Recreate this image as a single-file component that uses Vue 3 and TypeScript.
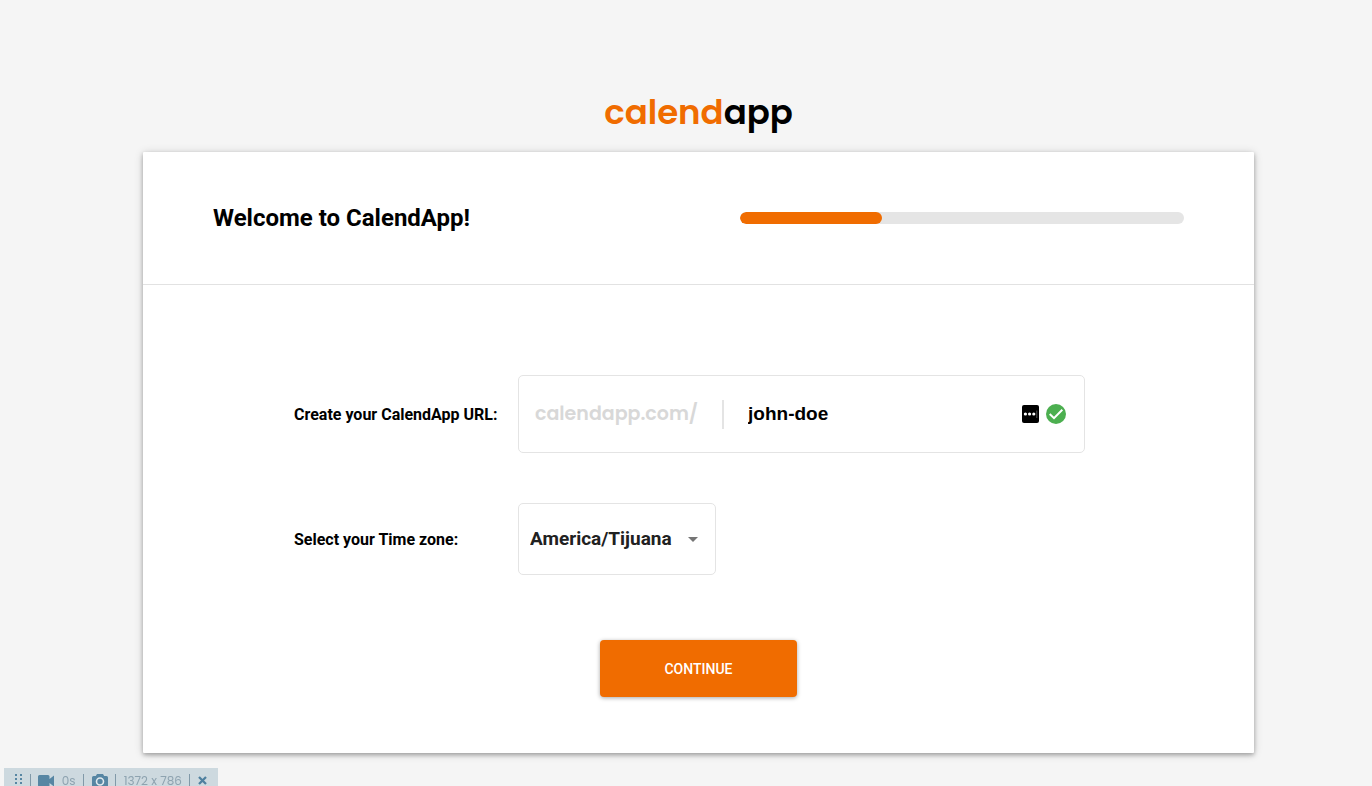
<script setup lang="ts">
import { computed, ref } from 'vue'

const slug = ref('john-doe')
const zone = ref('America/Tijuana')
const zones: string[] = ['America/Tijuana', 'America/Denver', 'America/Chicago']
const progress = ref(32)
const barStyle = computed(() => ({ width: `${progress.value}%` }))
</script>

<template>
  <div class="page">
    <header class="brand">
      <h1 class="logo"><span class="logo-accent">calend</span>app</h1>
    </header>

    <main class="card">
      <div class="card-head">
        <h2 class="title">Welcome to CalendApp!</h2>
        <div class="track" role="progressbar" aria-label="Setup progress" :aria-valuenow="progress" aria-valuemin="0" aria-valuemax="100">
          <div class="bar" :style="barStyle"></div>
        </div>
      </div>

      <form class="form" @submit.prevent>
        <div class="row">
          <label class="label" for="slug">Create your CalendApp URL:</label>
          <div class="url-field">
            <span class="prefix">calendapp.com/</span>
            <span class="divider"></span>
            <input id="slug" v-model="slug" class="slug" type="text" autocomplete="off" spellcheck="false" />
            <svg class="autofill" width="17" height="18" viewBox="0 0 17 18" aria-hidden="true">
              <rect width="17" height="18" rx="2" fill="#000" />
              <circle cx="3.4" cy="9" r="1.6" fill="#fff" />
              <circle cx="7.6" cy="9" r="1.6" fill="#fff" />
              <circle cx="11.8" cy="9" r="1.6" fill="#fff" />
              <path d="M14.8 5.500v7.500" stroke="#555" stroke-width="1" />
            </svg>
            <svg class="valid" width="20" height="20" viewBox="0 0 20 20" aria-hidden="true">
              <circle cx="10" cy="10" r="10" fill="#4caf50" />
              <path d="M3.700 10 8 14.200 16.300 5.800" fill="none" stroke="#fff" stroke-width="2" />
            </svg>
          </div>
        </div>

        <div class="row">
          <label class="label" for="zone">Select your Time zone:</label>
          <div class="zone-field">
            <select id="zone" v-model="zone" class="zone">
              <option v-for="z in zones" :key="z" :value="z">{{ z }}</option>
            </select>
            <svg class="caret" width="10" height="5" viewBox="0 0 10 5" aria-hidden="true">
              <path d="M0 0h10L5 5z" fill="#757575" />
            </svg>
          </div>
        </div>

        <button class="continue" type="submit">CONTINUE</button>
      </form>
    </main>

    <aside class="recorder" aria-label="Screen recorder">
      <svg class="grip" width="7" height="10" viewBox="0 0 7 10" aria-hidden="true">
        <path d="M0 0h2v2H0zM5 0h2v2H5zM0 4h2v2H0zM5 4h2v2H5zM0 8h2v2H0zM5 8h2v2H5z" fill="#5786a3" />
      </svg>
      <span class="tick"></span>
      <button class="tool" type="button" aria-label="Record">
        <svg width="16" height="12" viewBox="0 0 16 12">
          <path d="M1.500 0H10q1.500 0 1.500 1.500V4L16 0.500v11L11.500 8v2.500Q11.500 12 10 12H1.500Q0 12 0 10.500v-9Q0 0 1.500 0z" fill="#5786a3" />
        </svg>
      </button>
      <span class="time">0s</span>
      <span class="tick"></span>
      <button class="tool" type="button" aria-label="Capture">
        <svg width="16" height="14" viewBox="0 0 16 14">
          <path d="M5 0h6l1.200 2H14.500Q16 2 16 3.500v9Q16 14 14.500 14h-13Q0 14 0 12.500v-9Q0 2 1.500 2h2.300z" fill="#5786a3" />
          <circle cx="8" cy="7.500" r="3.500" fill="#5786a3" stroke="#e2eaee" stroke-width="1.600" />
        </svg>
      </button>
      <span class="tick"></span>
      <span class="size">1372 x 786</span>
      <span class="tick"></span>
      <button class="tool" type="button" aria-label="Close">
        <svg width="9" height="9" viewBox="0 0 9 9">
          <path d="M1 1l7 7M8 1 1 8" stroke="#4f809f" stroke-width="2.300" />
        </svg>
      </button>
    </aside>
  </div>
</template>

<style>
body {
  margin: 0;
  background: #f5f5f5;
}
</style>

<style scoped>
* {
  box-sizing: border-box;
}
.page {
  min-height: 100vh;
  padding: 0 118px 32px 143px;
  background: #f5f5f5;
  font-family: Roboto, "Liberation Sans", sans-serif;
  color: #000;
}
.brand {
  display: flex;
  justify-content: center;
  padding: 88px 0 16px;
}
.logo {
  margin: 0;
  font: 600 34px/48px Poppins, Inter, sans-serif;
}
.logo-accent {
  color: #f06c00;
}
.card {
  background: #fff;
  border-radius: 1px;
  box-shadow: 0 2px 4px rgba(0, 0, 0, 0.28), 0 1px 10px rgba(0, 0, 0, 0.16);
}
.card-head {
  display: flex;
  align-items: center;
  justify-content: space-between;
  padding: 50px 70px;
  border-bottom: 1px solid #e2e2e2;
}
.title {
  margin: 0;
  font-size: 24px;
  line-height: 32px;
  font-weight: 700;
}
.track {
  width: 444px;
  height: 12px;
  border-radius: 6px;
  background: #e5e5e5;
  overflow: hidden;
}
.bar {
  height: 12px;
  border-radius: 6px;
  background: #f06c00;
}
.form {
  display: flex;
  flex-direction: column;
  padding: 90px 151px 56px;
}
.row {
  display: grid;
  grid-template-columns: 204px minmax(0, 1fr);
  column-gap: 20px;
  align-items: center;
  margin-bottom: 50px;
  padding-right: 18px;
}
.label {
  padding-top: 2px;
  font-size: 16px;
  line-height: 20px;
  font-weight: 700;
  white-space: nowrap;
}
.url-field {
  display: flex;
  align-items: center;
  height: 78px;
  padding: 0 18px 0 16px;
  border: 1px solid #e4e4e4;
  border-radius: 5px;
}
.prefix {
  font: 600 19px/28px Poppins, Inter, sans-serif;
  color: #d8d8d8;
}
.divider {
  width: 2px;
  height: 29px;
  margin: 0 24px;
  background: #e4e4e4;
}
.slug {
  flex: 1;
  min-width: 0;
  padding: 0;
  border: 0;
  outline: 0;
  background: none;
  font: 700 19px/28px "Liberation Sans", Arial, sans-serif;
  color: #000;
}
.autofill {
  margin-right: 7px;
}
.zone-field {
  display: grid;
  grid-template-columns: 1fr;
  align-items: center;
  justify-self: start;
  width: 198px;
  height: 72px;
  border: 1px solid #e4e4e4;
  border-radius: 5px;
}
.zone,
.caret {
  grid-area: 1 / 1;
}
.zone {
  width: 100%;
  height: 100%;
  padding: 0 32px 0 11px;
  border: 0;
  outline: 0;
  appearance: none;
  background: none;
  font: 700 19px/28px Roboto, sans-serif;
  color: #212121;
}
.caret {
  justify-self: end;
  margin-right: 17px;
  pointer-events: none;
}
.continue {
  align-self: center;
  width: 197px;
  height: 57px;
  margin: 15px 0 0;
  padding: 0;
  border: 0;
  border-radius: 4px;
  background: #f06c00;
  box-shadow: 0 1px 4px rgba(0, 0, 0, 0.35);
  font: 500 14px/20px Roboto, sans-serif;
  color: #fff;
}
.recorder {
  position: fixed;
  left: 4px;
  bottom: 0;
  display: flex;
  align-items: center;
  width: 214px;
  height: 18px;
  padding: 7px 11px 0;
  justify-content: space-between;
  background: #cdd9df;
  font: 400 12px/18px Poppins, Inter, sans-serif;
  color: #8ea3b0;
}
.tick {
  width: 1px;
  height: 14px;
  background: #8199a8;
}
.tool {
  display: flex;
  padding: 0;
  border: 0;
  background: none;
}
.grip {
  flex: none;
  margin-bottom: 3px;
}
</style>
